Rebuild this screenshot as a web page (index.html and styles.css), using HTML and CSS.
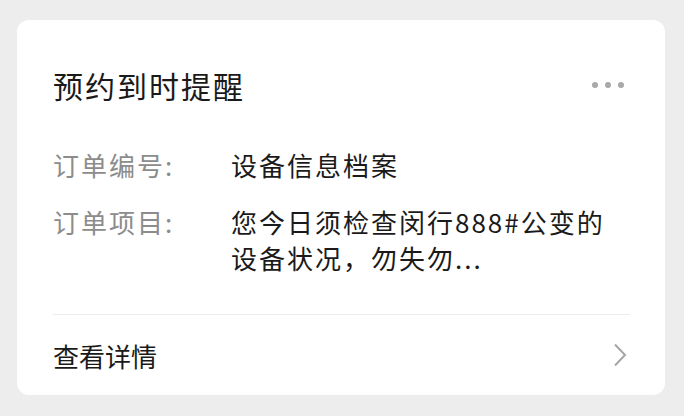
FILE: index.html
```html
<!DOCTYPE html>
<html lang="zh-CN">
<head>
    <meta charset="UTF-8">
    <meta name="viewport" content="width=device-width, initial-scale=1.0">
    <title>预约到时提醒</title>
    <link rel="stylesheet" href="styles.css">
</head>
<body>

    <div class="card">
        <div class="card-header">
            <h2 class="title">预约到时提醒</h2>
            <div class="more">
                <span class="dot"></span>
                <span class="dot"></span>
                <span class="dot"></span>
            </div>
        </div>

        <div class="info">
            <div class="row">
                <span class="label">订单编号:</span>
                <span class="value">设备信息档案</span>
            </div>
            <div class="row">
                <span class="label">订单项目:</span>
                <span class="value">您今日须检查闵行888#公变的设备状况，勿失勿...</span>
            </div>
        </div>

        <div class="card-footer">
            <span>查看详情</span>
            <svg class="arrow" width="14" height="24" viewBox="0 0 14 24">
                <path d="M2 1.5 L12 12 L2 22.5" fill="none" stroke="#a6a6a6" stroke-width="2"/>
            </svg>
        </div>
    </div>

</body>
</html>
```

FILE: styles.css
```css
body {
    margin: 0;
    padding: 20px 19px 21px 17px;
    background-color: #ededed;
    font-family: "Noto Sans CJK SC", "Noto Sans", sans-serif;
    color: #1a1a1a;
}
.card {
    background: #fff;
    border-radius: 12px;
    padding: 0 35px 0 36px;
}
.card-header {
    display: flex;
    align-items: center;
    justify-content: space-between;
    padding-top: 45px;
}
.title {
    margin: 0;
    font-size: 30px;
    font-weight: normal;
    letter-spacing: 2px;
    line-height: 40px;
}
.more {
    display: flex;
    gap: 7px;
    margin-right: 6px;
}
.dot {
    width: 6px;
    height: 6px;
    border-radius: 50%;
    background: #a8a8a8;
}
.info {
    padding: 42px 0 38px;
    border-bottom: 1px solid #ececec;
}
.row {
    display: flex;
    font-size: 26px;
    letter-spacing: 2px;
    line-height: 36px;
}
.row + .row {
    margin-top: 21px;
}
.label {
    width: 178px;
    flex-shrink: 0;
    color: #8c8c8c;
}
.value {
    max-width: 392px;
}
.card-footer {
    display: flex;
    align-items: center;
    justify-content: space-between;
    height: 80px;
    font-size: 26px;
}
.arrow {
    margin-right: 3px;
}
```
